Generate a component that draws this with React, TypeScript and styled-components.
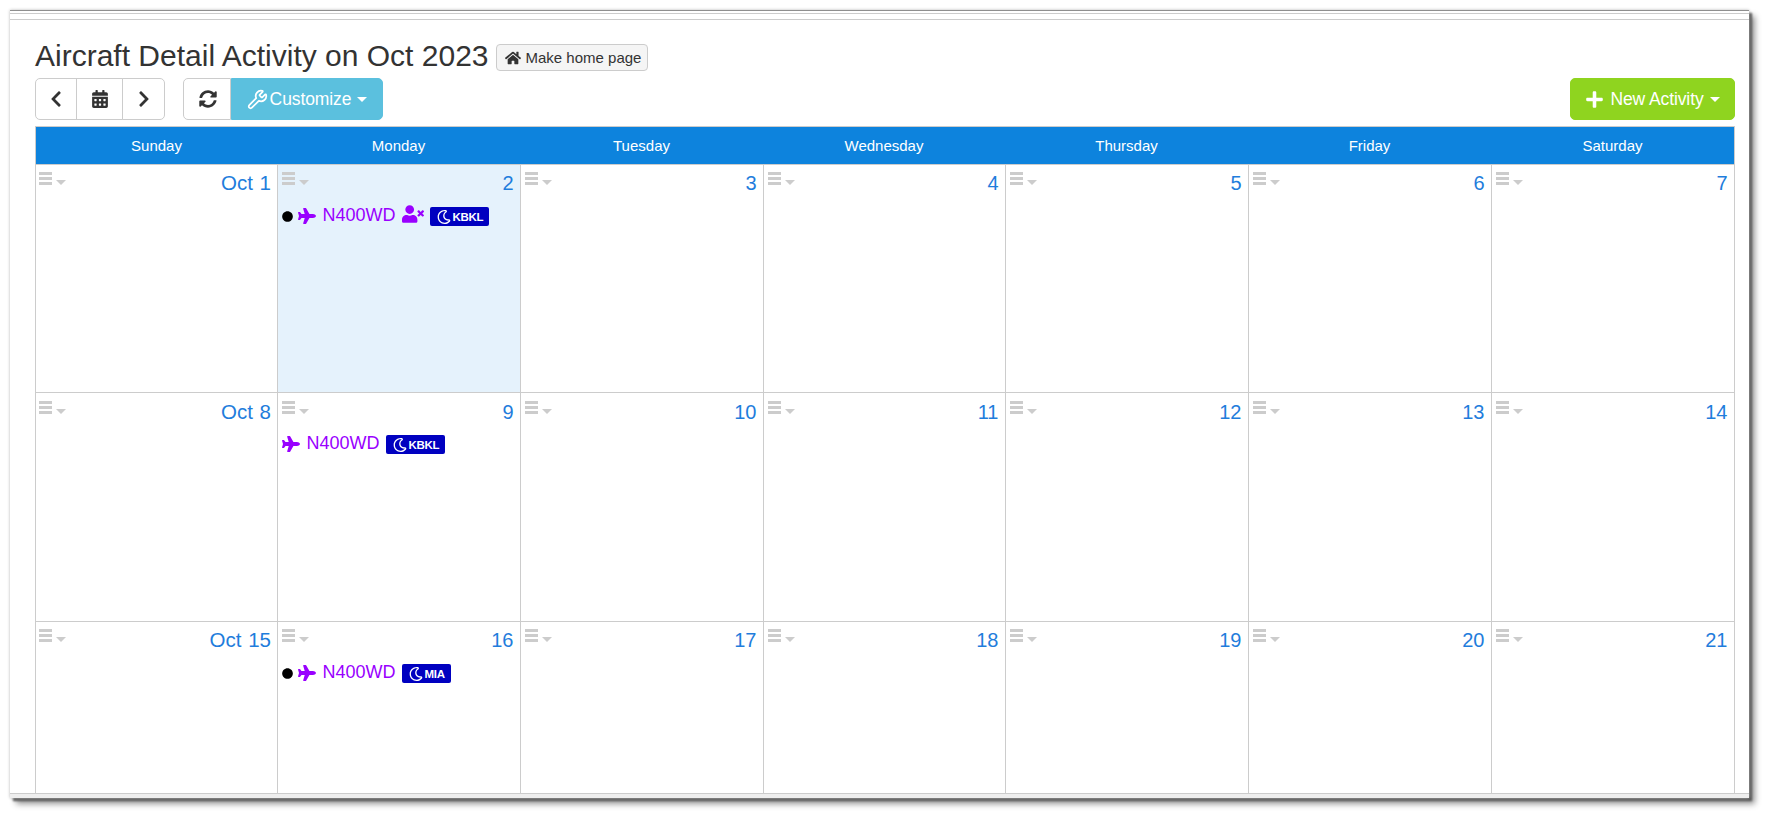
import React from "react";
import styled, { createGlobalStyle } from "styled-components";
import {
  FaChevronLeft,
  FaChevronRight,
  FaCalendarAlt,
  FaSyncAlt,
  FaHome,
  FaPlus,
  FaPlane,
  FaUserTimes,
  FaRegMoon,
  FaCircle,
} from "react-icons/fa";
import { Wrench } from "lucide-react";

const GlobalStyle = createGlobalStyle`
  html, body { margin: 0; padding: 0; background: #fff; }
  body { font-family: "Liberation Sans", Arial, sans-serif; color: #333; overflow: hidden; }
`;

const Stage = styled.div`
  width: 1767px;
  height: 816px;
  padding: 10px 18px 18px 10px;
  box-sizing: border-box;
`;

const Win = styled.div`
  height: 788px;
  background: #fff;
  display: flex;
  flex-direction: column;
  border-top: 1px solid #8f8f8f;
  box-sizing: border-box;
  box-shadow: 0 0 3px #bbb, 3px 3px 2px #555, 6px 6px 6px #999;
`;

const TopLines = styled.div`
  height: 5px;
  margin-top: 2px;
  border-top: 1px solid #ccc;
  border-bottom: 1px solid #ccc;
  flex: none;
`;

const Content = styled.div`
  flex: 1;
  min-height: 0;
  overflow: hidden;
  padding: 17px 14px 0 25px;
`;

const Footer = styled.div`
  flex: none;
  height: 4px;
  background: #eee;
  border-top: 1px solid #ccc;
`;

const TitleRow = styled.div`
  display: flex;
  align-items: flex-start;
  height: 41px;
  gap: 7px;
`;

const Title = styled.h1`
  margin: 0;
  font-size: 30px;
  font-weight: 400;
  line-height: 37px;
  color: #333;
`;

const HomeButton = styled.button`
  display: inline-flex;
  align-items: center;
  gap: 5px;
  height: 27px;
  width: 152px;
  padding: 0 0 0 8px;
  box-sizing: border-box;
  margin-top: 7px;
  border: 1px solid #ccc;
  border-radius: 4px;
  background: #f5f5f5;
  color: #333;
  white-space: nowrap;
  font: 15px "Liberation Sans", Arial, sans-serif;
`;

const Toolbar = styled.div`
  display: flex;
  align-items: flex-start;
  height: 48px;
`;

const Group = styled.div`
  display: flex;
  margin-right: 18px;
`;

const Spacer = styled.div`
  flex: 1;
`;

const IconButton = styled.button<{ $w: number; $pos?: "first" | "last"; $nudge?: number }>`
  width: ${(p) => p.$w}px;
  height: 42px;
  padding: 0 0 0 ${(p) => p.$nudge ?? 0}px;
  display: flex;
  align-items: center;
  justify-content: center;
  box-sizing: border-box;
  background: #fff;
  color: #333;
  border: 1px solid #ccc;
  margin-left: ${(p) => (p.$pos === "first" ? "0" : "-1px")};
  border-radius: ${(p) =>
    p.$pos === "first" ? "5px 0 0 5px" : p.$pos === "last" ? "0 5px 5px 0" : "0"};
`;

const ActionButton = styled.button<{ $bg: string; $w: number; $round: string; $gap: number }>`
  width: ${(p) => p.$w}px;
  height: 42px;
  display: flex;
  align-items: center;
  justify-content: center;
  gap: ${(p) => p.$gap}px;
  padding: 0;
  box-sizing: border-box;
  border: 1px solid ${(p) => p.$bg};
  border-radius: ${(p) => p.$round};
  background: ${(p) => p.$bg};
  color: #fff;
  font: 17.5px "Liberation Sans", Arial, sans-serif;
  letter-spacing: -0.1px;
`;

const Caret = styled.span<{ $color: string; $ml?: number }>`
  display: inline-block;
  width: 0;
  height: 0;
  margin-left: ${(p) => p.$ml ?? 0}px;
  border-left: 5px solid transparent;
  border-right: 5px solid transparent;
  border-top: 5px solid ${(p) => p.$color};
`;

const Calendar = styled.div`
  border: 1px solid #ccc;
  border-bottom: 0;
  box-sizing: border-box;
  width: 1700px;
`;

const columns = "241px 243px 243px 242px 243px 243px 243px";

const HeaderRow = styled.div`
  display: grid;
  grid-template-columns: ${columns};
  background: #0d83dd;
  height: 37px;
  border-bottom: 1px solid #ccc;
`;

const HeaderCell = styled.div`
  color: #fff;
  font-size: 15px;
  line-height: 37px;
  text-align: center;
`;

const Week = styled.div<{ $h: number }>`
  display: grid;
  grid-template-columns: ${columns};
  height: ${(p) => p.$h}px;
  box-sizing: border-box;
  border-bottom: 1px solid #ccc;
`;

const Day = styled.div<{ $today?: boolean; $top: number }>`
  border-left: 1px solid #ccc;
  padding: ${(p) => p.$top}px 6.5px 0 4px;
  box-sizing: border-box;
  background: ${(p) => (p.$today ? "#e5f2fc" : "#fff")};
  &:first-child {
    border-left: 0;
    padding-left: 3px;
    padding-right: 6px;
  }
`;

const DayHead = styled.div`
  display: flex;
  justify-content: space-between;
  align-items: flex-start;
  height: 30px;
`;

const Menu = styled.div`
  display: flex;
  align-items: flex-end;
  gap: 4px;
  height: 13px;
`;

const Bars = styled.span`
  display: block;
  width: 13px;
  height: 13px;
  background: repeating-linear-gradient(#ccc 0 3px, transparent 3px 5px);
`;

const DateLabel = styled.span<{ $month: boolean }>`
  font-size: ${(p) => (p.$month ? 20.5 : 20)}px;
  line-height: 22px;
  word-spacing: ${(p) => (p.$month ? 1 : 0)}px;
  color: #1f7ddc;
`;

const Event = styled.div<{ $mt: number }>`
  display: flex;
  align-items: center;
  height: 21px;
  margin-top: ${(p) => p.$mt}px;
  color: #9900ff;
  font-size: 18px;
`;

const Dot = styled(FaCircle)`
  color: #000;
  margin-right: 5px;
  margin-top: 2px;
`;

const PlaneIcon = styled(FaPlane)`
  margin-right: 6.5px;
`;

const PersonIcon = styled(FaUserTimes)`
  margin-left: 6px;
  margin-top: -3px;
`;

const Badge = styled.span`
  display: inline-flex;
  align-items: center;
  gap: 2px;
  height: 19px;
  margin-left: 6px;
  margin-top: 2px;
  padding: 0 6px 0 7px;
  border-radius: 2px;
  background: #0000c0;
  color: #fff;
  font-size: 11.5px;
  font-weight: 700;
  letter-spacing: -0.3px;
`;

type Ev = { dot?: boolean; person?: boolean; code: string };

const days = ["Sunday", "Monday", "Tuesday", "Wednesday", "Thursday", "Friday", "Saturday"];

const weekRows = [
  { h: 228, top: 7, dates: [1, 2, 3, 4, 5, 6, 7] },
  { h: 229, top: 8, dates: [8, 9, 10, 11, 12, 13, 14] },
  { h: 229, top: 7, dates: [15, 16, 17, 18, 19, 20, 21] },
];

const events: Record<number, Ev> = {
  2: { dot: true, person: true, code: "KBKL" },
  9: { code: "KBKL" },
  16: { dot: true, code: "MIA" },
};

export default function App() {
  return (
    <Stage>
      <GlobalStyle />
      <Win>
        <TopLines />
        <Content>
          <TitleRow>
            <Title>Aircraft Detail Activity on Oct 2023</Title>
            <HomeButton>
              <FaHome size={16} />
              Make home page
            </HomeButton>
          </TitleRow>
          <Toolbar>
            <Group>
              <IconButton $w={42} $pos="first">
                <FaChevronLeft size={18} />
              </IconButton>
              <IconButton $w={47}>
                <FaCalendarAlt size={18} />
              </IconButton>
              <IconButton $w={43} $pos="last">
                <FaChevronRight size={18} />
              </IconButton>
            </Group>
            <Group>
              <IconButton $w={48} $pos="first" $nudge={1}>
                <FaSyncAlt size={18} />
              </IconButton>
              <ActionButton $bg="#5bc0de" $w={152} $gap={2} $round="0 5px 5px 0">
                <Wrench size={21} />
                Customize
                <Caret $color="#fff" $ml={4} />
              </ActionButton>
            </Group>
            <Spacer />
            <ActionButton $bg="#8fd41f" $w={165} $gap={6} $round="5px">
              <FaPlus size={19} />
              New Activity
              <Caret $color="#fff" />
            </ActionButton>
          </Toolbar>
          <Calendar>
            <HeaderRow>
              {days.map((d) => (
                <HeaderCell key={d}>{d}</HeaderCell>
              ))}
            </HeaderRow>
            {weekRows.map((w) => (
              <Week key={w.dates[0]} $h={w.h}>
                {w.dates.map((d, i) => {
                  const ev = events[d];
                  return (
                    <Day key={d} $today={d === 2} $top={w.top}>
                      <DayHead>
                        <Menu>
                          <Bars />
                          <Caret $color="#ccc" />
                        </Menu>
                        <DateLabel $month={i === 0}>{i === 0 ? `Oct ${d}` : d}</DateLabel>
                      </DayHead>
                      {ev && (
                        <Event $mt={10 - w.top}>
                          {ev.dot && <Dot size={11} />}
                          <PlaneIcon size={18} />
                          N400WD
                          {ev.person && <PersonIcon size={22} />}
                          <Badge>
                            <FaRegMoon size={14} />
                            {ev.code}
                          </Badge>
                        </Event>
                      )}
                    </Day>
                  );
                })}
              </Week>
            ))}
          </Calendar>
        </Content>
        <Footer />
      </Win>
    </Stage>
  );
}
